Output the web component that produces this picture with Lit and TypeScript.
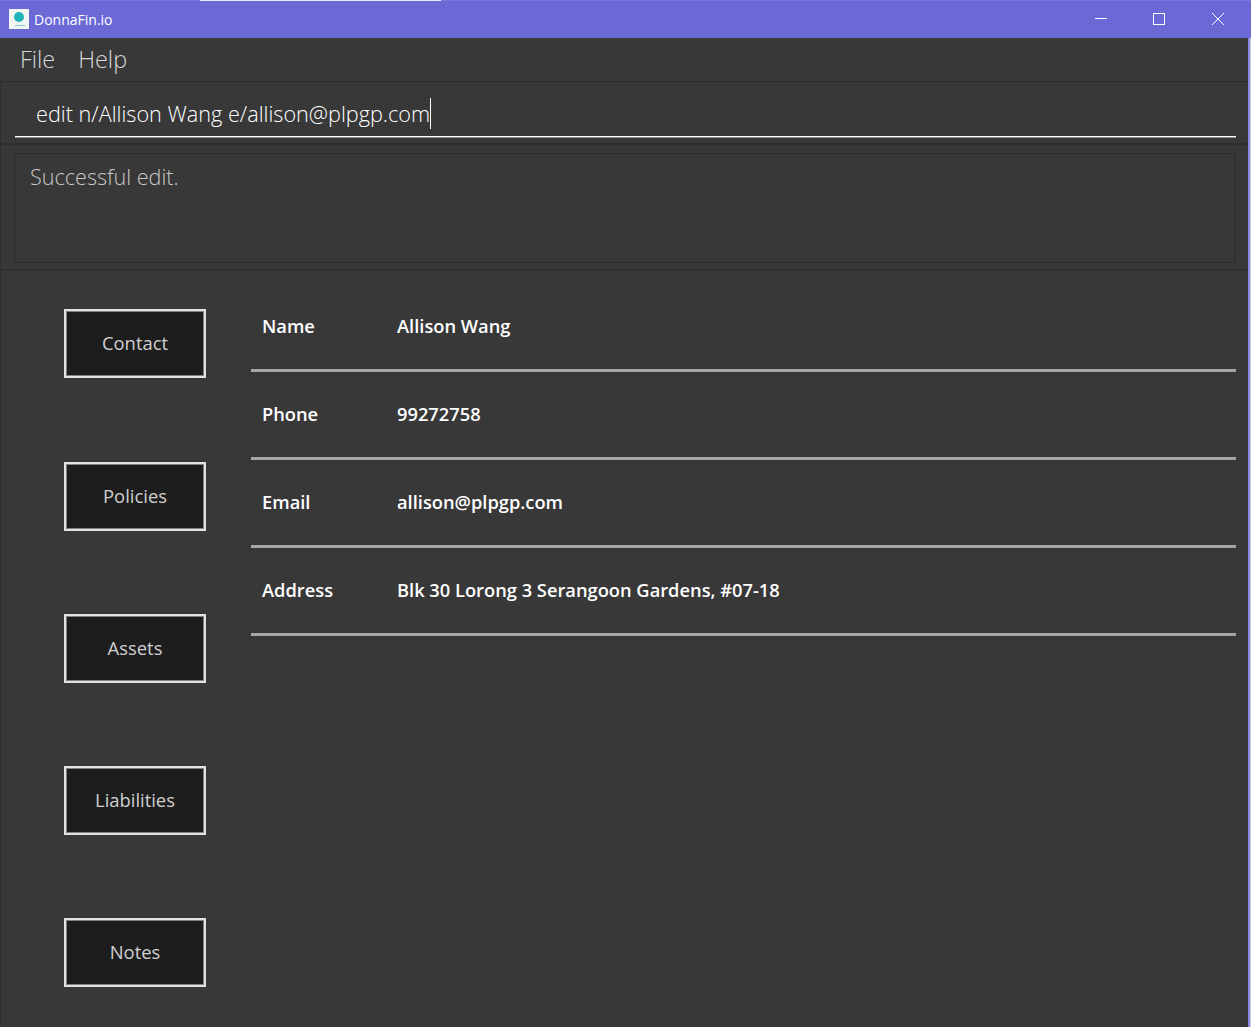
import { LitElement, html, css } from "lit";
import { customElement } from "lit/decorators.js";

const ROWS = [
  ["Name", "Allison Wang"],
  ["Phone", "99272758"],
  ["Email", "allison@plpgp.com"],
  ["Address", "Blk 30 Lorong 3 Serangoon Gardens, #07-18"],
];
const TABS = ["Contact", "Policies", "Assets", "Liabilities", "Notes"];

@customElement("app-root")
export class AppRoot extends LitElement {
  static styles = css`
    :host { display: block; width: 1251px; height: 1027px; overflow: hidden; background: #d4d4d8; font-family: "Open Sans", sans-serif; }
    .title { height: 38px; box-sizing: border-box; background: #6b69d6; border-top: 1px solid #7b79dc; display: flex; align-items: center; padding-left: 9px; padding-right: 4px; position: relative; }
    .strip { position: absolute; left: 200px; top: -1px; width: 241px; height: 1px; background: #e8e8f8; }
    .logo { width: 20px; height: 20px; margin-bottom: 1px; background: #f4f6f6; display: flex; align-items: center; justify-content: center; }
    .app-name { margin-left: 5px; color: #fff; font-size: 14px; }
    .win { margin-left: auto; display: flex; align-items: center; }
    .win-btn { width: 58px; height: 37px; box-sizing: border-box; padding-bottom: 1px; display: flex; align-items: center; justify-content: center; }
    .win-close { margin-left: 1px; }
    .body { width: 1250px; box-sizing: border-box; border-right: 2px solid #8c8ae0; background: #383838; }
    .menu { height: 44px; box-sizing: border-box; display: flex; align-items: center; gap: 23px; padding: 0 0 2px 20px; color: #d8d8d8; font-size: 23.4px; font-weight: 300; border-bottom: 1px solid #2e2e2e; }
    .cmd { height: 63px; box-sizing: border-box; padding: 0 12px 0 14px; border-bottom: 2px solid #2f2f2f; border-left: 1px solid #2f2f2f; }
    .cmd-in { height: 55px; box-sizing: border-box; border-bottom: 1px solid #fff; box-shadow: 0 1px 0 #8e8e8e; padding: 8px 0 0 21px; display: flex; align-items: center; color: #fff; font-size: 21.65px; font-weight: 300; white-space: nowrap; }
    .caret { display: inline-block; width: 1px; height: 31px; background: #fff; }
    .res { height: 126px; box-sizing: border-box; padding: 8px 12px 6px 13px; border-bottom: 2px solid #2f2f2f; border-left: 1px solid #2f2f2f; }
    .res-in { height: 110px; box-sizing: border-box; border: 1px solid #2c2c2c; padding: 8px 15px; color: #c8c8c8; font-size: 21.6px; font-weight: 300; line-height: 30px; }
    .main { display: flex; align-items: flex-start; height: 756px; box-sizing: border-box; padding: 38.4px 12px 0 63px; border-left: 1px solid #2f2f2f; }
    .tabs { width: 142px; display: flex; flex-direction: column; gap: 83.25px; }
    .tab { width: 142px; height: 69px; box-sizing: border-box; background: #1d1d1d; border: 2px solid #e2e2e2; box-shadow: inset 0 0 0 1px #808080; padding-bottom: 2px; display: flex; align-items: center; justify-content: center; color: #d0d0d0; font-size: 18.4px; }
    .rows { margin: -25.4px 0 0 45px; flex: 1; }
    .row { height: 88px; box-sizing: border-box; border-bottom: 3px solid #a6a6a6; display: flex; align-items: center; padding: 0 0 2px 11px; color: #fff; font-size: 18.3px; font-weight: 600; }
    .k { width: 135px; }
  `;

  render() {
    return html`
      <div class="title">
        <div class="strip"></div>
        <div class="logo">
          <svg width="14" height="16" viewBox="0 0 14 16">
            <circle cx="7" cy="6" r="5" fill="#1fb5b8"></circle>
            <rect x="3" y="14" width="10" height="1" fill="#7fd0d0"></rect>
          </svg>
        </div>
        <span class="app-name">DonnaFin.io</span>
        <div class="win">
          <div class="win-btn">
            <svg width="12" height="12" viewBox="0 0 12 12"><rect y="5" width="12" height="1" fill="#fff"></rect></svg>
          </div>
          <div class="win-btn">
            <svg width="12" height="12" viewBox="0 0 12 12"><rect x=".5" y=".5" width="11" height="11" fill="none" stroke="#fff"></rect></svg>
          </div>
          <div class="win-btn win-close">
            <svg width="12" height="12" viewBox="0 0 12 12"><path d="M0 0L12 12M12 0L0 12" stroke="#fff" fill="none"></path></svg>
          </div>
        </div>
      </div>
      <div class="body">
        <div class="menu"><span>File</span><span>Help</span></div>
        <div class="cmd"><div class="cmd-in">edit n/Allison Wang e/allison@plpgp.com<span class="caret"></span></div></div>
        <div class="res"><div class="res-in">Successful edit.</div></div>
        <div class="main">
          <div class="tabs">${TABS.map((t) => html`<div class="tab">${t}</div>`)}</div>
          <div class="rows">
            ${ROWS.map(([k, v]) => html`<div class="row"><span class="k">${k}</span><span>${v}</span></div>`)}
          </div>
        </div>
      </div>
    `;
  }
}
